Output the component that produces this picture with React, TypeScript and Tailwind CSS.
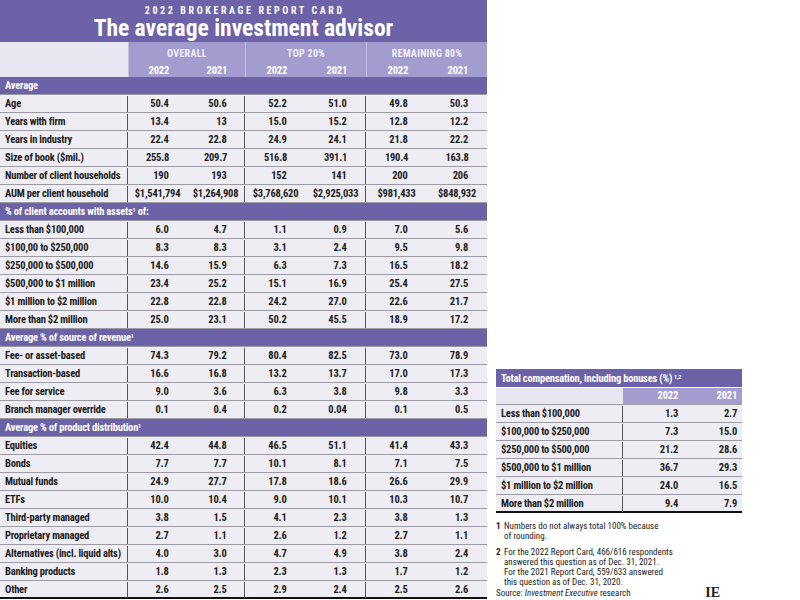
import React from "react";

const cols = "grid grid-cols-[128px_59px_58px_61px_60px_61px_60px]";
const font =
  "font-['Roboto_Condensed','DejaVu_Sans_Condensed','Liberation_Sans_Narrow',Roboto,sans-serif] font-stretch-condensed";

type RowData = [string, string, string, string, string, string, string];

const sections: { title: React.ReactNode; rows: RowData[] }[] = [
  {
    title: "Average",
    rows: [
      ["Age", "50.4", "50.6", "52.2", "51.0", "49.8", "50.3"],
      ["Years with firm", "13.4", "13", "15.0", "15.2", "12.8", "12.2"],
      ["Years in industry", "22.4", "22.8", "24.9", "24.1", "21.8", "22.2"],
      ["Size of book ($mil.)", "255.8", "209.7", "516.8", "391.1", "190.4", "163.8"],
      ["Number of client households", "190", "193", "152", "141", "200", "206"],
      ["AUM per client household", "$1,541,794", "$1,264,908", "$3,768,620", "$2,925,033", "$981,433", "$848,932"],
    ],
  },
  {
    title: (
      <>
        % of client accounts with assets<sup className="text-[6px]">1</sup> of:
      </>
    ),
    rows: [
      ["Less than $100,000", "6.0", "4.7", "1.1", "0.9", "7.0", "5.6"],
      ["$100,00 to $250,000", "8.3", "8.3", "3.1", "2.4", "9.5", "9.8"],
      ["$250,000 to $500,000", "14.6", "15.9", "6.3", "7.3", "16.5", "18.2"],
      ["$500,000 to $1 million", "23.4", "25.2", "15.1", "16.9", "25.4", "27.5"],
      ["$1 million to $2 million", "22.8", "22.8", "24.2", "27.0", "22.6", "21.7"],
      ["More than $2 million", "25.0", "23.1", "50.2", "45.5", "18.9", "17.2"],
    ],
  },
  {
    title: (
      <>
        Average % of source of revenue<sup className="text-[6px]">1</sup>
      </>
    ),
    rows: [
      ["Fee- or asset-based", "74.3", "79.2", "80.4", "82.5", "73.0", "78.9"],
      ["Transaction-based", "16.6", "16.8", "13.2", "13.7", "17.0", "17.3"],
      ["Fee for service", "9.0", "3.6", "6.3", "3.8", "9.8", "3.3"],
      ["Branch manager override", "0.1", "0.4", "0.2", "0.04", "0.1", "0.5"],
    ],
  },
  {
    title: (
      <>
        Average % of product distribution<sup className="text-[6px]">1</sup>
      </>
    ),
    rows: [
      ["Equities", "42.4", "44.8", "46.5", "51.1", "41.4", "43.3"],
      ["Bonds", "7.7", "7.7", "10.1", "8.1", "7.1", "7.5"],
      ["Mutual funds", "24.9", "27.7", "17.8", "18.6", "26.6", "29.9"],
      ["ETFs", "10.0", "10.4", "9.0", "10.1", "10.3", "10.7"],
      ["Third-party managed", "3.8", "1.5", "4.1", "2.3", "3.8", "1.3"],
      ["Proprietary managed", "2.7", "1.1", "2.6", "1.2", "2.7", "1.1"],
      ["Alternatives (incl. liquid alts)", "4.0", "3.0", "4.7", "4.9", "3.8", "2.4"],
      ["Banking products", "1.8", "1.3", "2.3", "1.3", "1.7", "1.2"],
      ["Other", "2.6", "2.5", "2.9", "2.4", "2.5", "2.6"],
    ],
  },
];

const compRows: [string, string, string][] = [
  ["Less than $100,000", "1.3", "2.7"],
  ["$100,000 to $250,000", "7.3", "15.0"],
  ["$250,000 to $500,000", "21.2", "28.6"],
  ["$500,000 to $1 million", "36.7", "29.3"],
  ["$1 million to $2 million", "24.0", "16.5"],
  ["More than $2 million", "9.4", "7.9"],
];

const cellText = "text-[10.5px] tracking-[-0.02em] font-bold";

const DataRow = ({ row, last }: { row: RowData; last: boolean }) => (
  <div
    className={`${cols} h-[18px] bg-[#eeedf4] ${cellText} text-[#1c1c1c] pt-px ${
      last ? "border-b-2 border-[#111]" : "border-b border-[#9c9ba3]"
    }`}
  >
    <div className="flex items-center pl-[5px] border-r border-[#55545c] whitespace-nowrap">{row[0]}</div>
    {row.slice(1).map((v, i) => (
      <div
        key={i}
        className={`flex items-center justify-center ${i === 1 || i === 3 ? "border-r border-[#55545c]" : ""}`}
      >
        <span className="min-w-[22px] text-right whitespace-nowrap">{v}</span>
      </div>
    ))}
  </div>
);

const Group = ({ label }: { label: string }) => (
  <div className="col-span-2 flex flex-col border-l border-[#c3bfe2] bg-[#a39dcf] text-white">
    <div className="h-[19px] flex items-end justify-center text-[10px] font-bold tracking-[0.03em] text-[#f1f0fa]">
      {label}
    </div>
    <div className={`flex-1 grid grid-cols-2 pt-[2px] ${cellText}`}>
      <div className="flex items-center justify-center">
        <span className="min-w-[22px] text-right">2022</span>
      </div>
      <div className="flex items-center justify-center">
        <span className="min-w-[22px] text-right">2021</span>
      </div>
    </div>
  </div>
);

export default function App() {
  return (
    <div className={`w-[800px] h-[600px] bg-white flex overflow-hidden ${font}`}>
      <div className="w-[487px] flex flex-col">
        <div className="h-[42px] bg-[#6b62a7] flex flex-col items-center text-white overflow-hidden">
          <div className="pt-[6px] text-[10px] font-bold leading-[10px] tracking-[0.26em] pl-[0.26em]">
            2022 BROKERAGE REPORT CARD
          </div>
          <div className="text-[23.5px] font-bold leading-[24px]">The average investment advisor</div>
        </div>
        <div className={`${cols} h-[35px]`}>
          <div className="bg-[#e8e6f1]" />
          <Group label="OVERALL" />
          <Group label="TOP 20%" />
          <Group label="REMAINING 80%" />
        </div>
        {sections.map((s, si) => (
          <React.Fragment key={si}>
            <div
              className={`h-[18px] bg-[#6b62a7] text-white ${cellText} flex items-center pl-[5px] pt-px border-b border-[#9c9ba3]`}
            >
              <span>{s.title}</span>
            </div>
            {s.rows.map((r, ri) => (
              <DataRow key={ri} row={r} last={si === sections.length - 1 && ri === s.rows.length - 1} />
            ))}
          </React.Fragment>
        ))}
      </div>

      <div className="ml-[9px] w-[246px] flex flex-col pt-[369px]">
        <div className={`h-[18px] bg-[#6b62a7] text-white ${cellText} flex items-center pl-[5px] pt-px whitespace-nowrap`}>
          <span>
            Total compensation, including bonuses (%)<sup className="text-[6px] ml-[2px]">1,2</sup>
          </span>
        </div>
        <div className={`grid grid-cols-[127px_59px_60px] h-[18px] pt-px border-b border-[#9c9ba3] ${cellText}`}>
          <div className="bg-[#e8e6f1]" />
          <div className="bg-[#a39dcf] text-white flex items-center justify-end pr-[4px]">2022</div>
          <div className="bg-[#a39dcf] text-white flex items-center justify-end pr-[5px]">2021</div>
        </div>
        {compRows.map((r, i) => (
          <div
            key={i}
            className={`grid grid-cols-[127px_59px_60px] h-[18px] pt-px bg-[#eeedf4] ${cellText} text-[#1c1c1c] ${
              i === compRows.length - 1 ? "border-b-2 border-[#111]" : "border-b border-[#9c9ba3]"
            }`}
          >
            <div className="flex items-center pl-[5px] border-r border-[#55545c] whitespace-nowrap">{r[0]}</div>
            <div className="flex items-center justify-end pr-[4px]">{r[1]}</div>
            <div className="flex items-center justify-end pr-[5px]">{r[2]}</div>
          </div>
        ))}
        <div className="mt-[8px] text-[9px] leading-[10px] text-[#222] flex flex-col whitespace-nowrap">
          <div className="flex">
            <span className="w-[8px] font-bold">1</span>
            <span className="flex flex-col">
              <span>Numbers do not always total 100% because</span>
              <span>of rounding.</span>
            </span>
          </div>
          <div className="flex mt-[6px]">
            <span className="w-[8px] font-bold">2</span>
            <span className="flex flex-col">
              <span>For the 2022 Report Card, 466/616 respondents</span>
              <span>answered this question as of Dec. 31, 2021.</span>
              <span>For the 2021 Report Card, 559/633 answered</span>
              <span>this question as of Dec. 31, 2020.</span>
            </span>
          </div>
          <div className="flex items-center justify-between mt-[1px] h-[10px]">
            <span>
              Source: <i>Investment Executive</i> research
            </span>
            <span className="mr-[22px] font-['Liberation_Serif',serif] font-bold text-[14px] leading-[10px]">IE</span>
          </div>
        </div>
      </div>
    </div>
  );
}
